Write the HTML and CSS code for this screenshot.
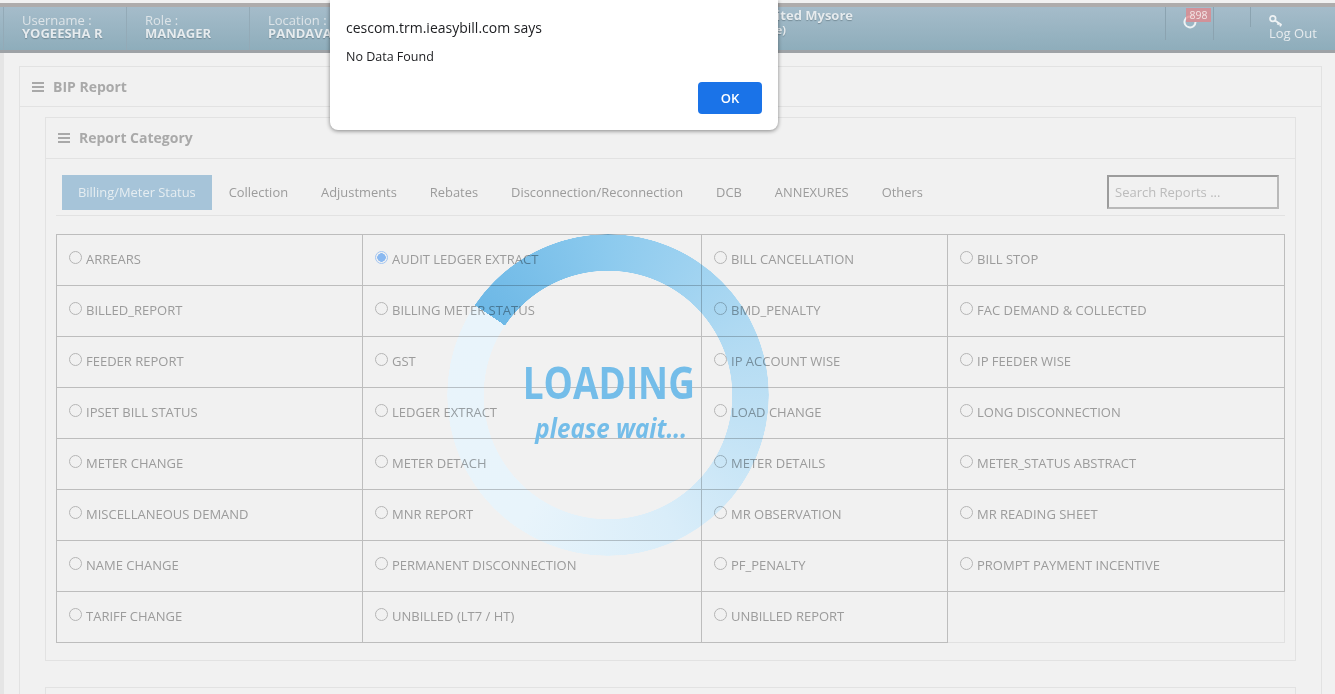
FILE: index.html
```html
<!DOCTYPE html>
<html lang="en">
<head>
<meta charset="utf-8">
<title>BIP Report</title>
<link rel="stylesheet" href="styles.css">
</head>
<body>
<header class="topbar">
  <div class="cell"><span class="cell-label">Username :</span><strong class="cell-value">YOGEESHA R</strong></div>
  <div class="cell"><span class="cell-label">Role :</span><strong class="cell-value">MANAGER</strong></div>
  <div class="cell"><span class="cell-label">Location :</span><strong class="cell-value">PANDAVAPURA</strong></div>
  <div class="org">
    <div class="org-name">Chamundeshwari Electricity Supply Corporation Limited Mysore</div>
    <div class="org-sub">(Mysore Zone)</div>
  </div>
  <div class="tools">
    <div class="tool tool-notify">
      <svg class="refresh" viewBox="0 0 14 14" width="14" height="14"><path d="M9.8 2.2 A5.5 5.5 0 1 0 12.5 7" fill="none" stroke="#eef2f4" stroke-width="2"/></svg>
      <span class="badge">898</span>
    </div>
    <div class="tool tool-spacer"></div>
    <div class="tool tool-logout">
      <svg class="key" viewBox="0 0 14 14" width="14" height="14"><circle cx="3.8" cy="4.6" r="2.8" fill="none" stroke="#eef2f4" stroke-width="1.7"/><path d="M6 6.4 L12.6 11 M9.6 9 L8.6 10.8 M12 10.6 L11 12.4" fill="none" stroke="#eef2f4" stroke-width="1.8"/></svg>
      <span>Log Out</span>
    </div>
  </div>
</header>

<div class="ring"></div>

<main class="page">
  <section class="panel outer">
    <h2 class="panel-head"><span class="burger"></span>BIP Report</h2>
    <section class="panel inner">
      <h3 class="panel-head head-inner"><span class="burger"></span>Report Category</h3>
      <div class="panel-body">
        <nav class="tabs">
          <a class="tab active">Billing/Meter Status</a>
          <a class="tab">Collection</a>
          <a class="tab">Adjustments</a>
          <a class="tab">Rebates</a>
          <a class="tab">Disconnection/Reconnection</a>
          <a class="tab">DCB</a>
          <a class="tab">ANNEXURES</a>
          <a class="tab">Others</a>
          <input class="search" type="text" placeholder="Search Reports ...">
        </nav>
        <div class="reports">
          <label class="report"><input type="radio" name="r"><span>ARREARS</span></label>
          <label class="report"><input type="radio" name="r" checked><span>AUDIT LEDGER EXTRACT</span></label>
          <label class="report"><input type="radio" name="r"><span>BILL CANCELLATION</span></label>
          <label class="report"><input type="radio" name="r"><span>BILL STOP</span></label>
          <label class="report"><input type="radio" name="r"><span>BILLED_REPORT</span></label>
          <label class="report"><input type="radio" name="r"><span>BILLING METER STATUS</span></label>
          <label class="report"><input type="radio" name="r"><span>BMD_PENALTY</span></label>
          <label class="report"><input type="radio" name="r"><span>FAC DEMAND &amp; COLLECTED</span></label>
          <label class="report"><input type="radio" name="r"><span>FEEDER REPORT</span></label>
          <label class="report"><input type="radio" name="r"><span>GST</span></label>
          <label class="report"><input type="radio" name="r"><span>IP ACCOUNT WISE</span></label>
          <label class="report"><input type="radio" name="r"><span>IP FEEDER WISE</span></label>
          <label class="report"><input type="radio" name="r"><span>IPSET BILL STATUS</span></label>
          <label class="report"><input type="radio" name="r"><span>LEDGER EXTRACT</span></label>
          <label class="report"><input type="radio" name="r"><span>LOAD CHANGE</span></label>
          <label class="report"><input type="radio" name="r"><span>LONG DISCONNECTION</span></label>
          <label class="report"><input type="radio" name="r"><span>METER CHANGE</span></label>
          <label class="report"><input type="radio" name="r"><span>METER DETACH</span></label>
          <label class="report"><input type="radio" name="r"><span>METER DETAILS</span></label>
          <label class="report"><input type="radio" name="r"><span>METER_STATUS ABSTRACT</span></label>
          <label class="report"><input type="radio" name="r"><span>MISCELLANEOUS DEMAND</span></label>
          <label class="report"><input type="radio" name="r"><span>MNR REPORT</span></label>
          <label class="report"><input type="radio" name="r"><span>MR OBSERVATION</span></label>
          <label class="report"><input type="radio" name="r"><span>MR READING SHEET</span></label>
          <label class="report"><input type="radio" name="r"><span>NAME CHANGE</span></label>
          <label class="report"><input type="radio" name="r"><span>PERMANENT DISCONNECTION</span></label>
          <label class="report"><input type="radio" name="r"><span>PF_PENALTY</span></label>
          <label class="report"><input type="radio" name="r"><span>PROMPT PAYMENT INCENTIVE</span></label>
          <label class="report"><input type="radio" name="r"><span>TARIFF CHANGE</span></label>
          <label class="report"><input type="radio" name="r"><span>UNBILLED (LT7 / HT)</span></label>
          <label class="report"><input type="radio" name="r"><span>UNBILLED REPORT</span></label>
          <div class="report empty"></div>
        </div>
      </div>
    </section>
    <section class="panel inner next"></section>
  </section>
</main>

<div class="loader-text">
  <div class="loading">LOADING</div>
  <div class="wait">please wait...</div>
</div>

<div class="dialog">
  <div class="dialog-title">cescom.trm.ieasybill.com says</div>
  <div class="dialog-msg">No Data Found</div>
  <div class="dialog-actions"><button class="ok">OK</button></div>
</div>
</body>
</html>
```

FILE: styles.css
```css
* { box-sizing: border-box; }
html, body { margin: 0; height: 694px; overflow: hidden; }
body {
  background: #f1f1f1;
  font-family: "Open Sans", sans-serif;
  color: #a5a5a5;
  padding-top: 3px;
}

/* top bar */
.topbar {
  height: 50px;
  display: flex;
  background: linear-gradient(180deg, #a5bcca 0%, #8eadbb 100%);
  border-top: 4px solid #aeacac;
  border-bottom: 3px solid #9ea2a6;
  padding-left: 3px;
}
.cell {
  width: 123px;
  padding: 7px 0 0 18px;
  border-left: 1px solid #93aab7;
  display: flex;
  flex-direction: column;
  font-size: 13px;
  line-height: 13px;
  color: #dde4e8;
  white-space: nowrap;
}
.cell-value {
  color: #e6ebee;
  font-weight: 700;
  text-shadow: 0 1px 1px rgba(80, 100, 110, .5);
}
.org {
  flex: 0 0 481px;
  text-align: right;
  padding-top: 1px;
  font-weight: 700;
  color: #e6ebee;
  white-space: nowrap;
  text-shadow: 0 1px 1px rgba(80, 100, 110, .5);
}
.org-name { font-size: 13px; line-height: 15px; }
.org-sub { font-size: 11px; line-height: 13px; margin-right: 67px; }
.tools { display: flex; margin-left: auto; }
.tool { border-left: 1px solid #8ba3b0; height: 33px; position: relative; }
.tool-notify { width: 48px; }
.tool-spacer { width: 37px; }
.tool-logout {
  width: 85px;
  border-left: 0;
  padding: 7px 0 0 19px;
  font-size: 13px;
  line-height: 15px;
  color: #e6ebee;
  display: flex;
  flex-direction: column;
}
.tool-logout::before {
  content: "";
  position: absolute;
  left: 0;
  top: 0;
  width: 1px;
  height: 20px;
  background: #8ba3b0;
}
.tool-logout span { margin-top: -2px; }
.key { display: block; flex: none; }
.refresh { position: absolute; left: 17px; top: 8px; }
.badge {
  position: absolute;
  left: 20px;
  top: 1px;
  width: 25px;
  height: 14px;
  background: rgba(226, 134, 138, .75);
  color: #f3e6e6;
  font-size: 10.5px;
  line-height: 14px;
  text-align: center;
}

/* page: multiplied over the loader ring, so its lines and text show through */
.page {
  position: relative;
  mix-blend-mode: multiply;
  padding: 13px 13px 0 19px;
  background: linear-gradient(90deg, #f3f3f3 0 4px, transparent 4px);
}
.panel { border: 1px solid #f0f0f0; }
.outer { border-bottom: 0; }
.inner { margin: 10px 25px 0 25px; }
.next { margin-top: 26px; height: 8px; border-bottom: 0; }
.panel-head {
  margin: 0;
  height: 40px;
  padding-left: 12px;
  display: flex;
  align-items: center;
  gap: 9px;
  font-size: 14px;
  font-weight: 700;
  color: #b3b3b3;
  border-bottom: 1px solid #f0f0f0;
}
.head-inner { height: 41px; padding-bottom: 1px; }
.burger {
  width: 12px;
  height: 10px;
  border-top: 2px solid #b3b3b3;
  border-bottom: 2px solid #b3b3b3;
  position: relative;
}
.burger::after {
  content: "";
  position: absolute;
  left: 0;
  right: 0;
  top: 2px;
  height: 2px;
  background: #b3b3b3;
}
.panel-body { padding: 16px 10px 17px; }

/* tabs */
.tabs {
  display: flex;
  align-items: flex-start;
  height: 41px;
  padding: 0 6px;
  border-bottom: 1px solid #f0f0f0;
  gap: 1px;
}
.tab {
  height: 35px;
  padding: 0 16px;
  font-size: 12.9px;
  line-height: 35px;
  color: #a5a5a5;
  white-space: nowrap;
}
.tab.active { background: #b0d0e6; color: #f3fbff; }
.search {
  margin-left: auto;
  width: 172px;
  height: 34px;
  background: transparent;
  border: 2px solid;
  border-color: #a5a5a5 #c4c4c4 #c4c4c4 #a5a5a5;
  padding: 0 6px;
  font: 13px "Open Sans", sans-serif;
  color: #c7c7c7;
  border-radius: 0;
}
.search::placeholder { color: #c7c7c7; }

/* reports grid */
.reports {
  margin-top: 18px;
  display: grid;
  grid-template-columns: 306px 339px 246px 337px;
  grid-auto-rows: 51px;
  border-top: 1px solid #c8c8c8;
  border-left: 1px solid #c8c8c8;
}
.report {
  display: flex;
  align-items: flex-start;
  padding: 16px 0 0 12px;
  border-right: 1px solid #c8c8c8;
  border-bottom: 1px solid #c8c8c8;
  font-size: 13px;
  line-height: 17px;
  color: #a5a5a5;
}
.report span { margin-left: 4px; }
.report input {
  appearance: none;
  -webkit-appearance: none;
  flex: none;
  width: 13px;
  height: 13px;
  margin: 0;
  border: 1px solid #bfbfbf;
  border-radius: 50%;
  background: transparent;
}
.report input:checked {
  border-color: #aed2ff;
  background: radial-gradient(circle, #92c4ff 0 4px, transparent 4.5px);
}
.empty { border-color: #eeeeee; }

/* loader */
.ring {
  position: absolute;
  left: 447px;
  top: 234px;
  width: 322px;
  height: 322px;
  border-radius: 50%;
  background: conic-gradient(from 304deg,
    #6db8e6 0deg,
    #8ccaee 56deg,
    #b5dcf3 130deg,
    #d9edf9 210deg,
    #e8f4fb 270deg,
    #e9f4fb 356deg);
  -webkit-mask: radial-gradient(circle, transparent 124px, #000 124.5px, #000 160.5px, transparent 161px);
  mask: radial-gradient(circle, transparent 124px, #000 124.5px, #000 160.5px, transparent 161px);
}
.loader-text {
  position: absolute;
  left: 447px;
  top: 352px;
  width: 322px;
  text-align: center;
  color: #74bde9;
  font-weight: 700;
}
.loading { font-size: 44px; line-height: 60px; padding-left: 2px; transform: scaleX(.84); }
.wait { font-size: 26px; line-height: 30px; font-style: italic; margin-top: 1px; padding-left: 7px; transform: scaleX(.93); }

/* dialog */
.dialog {
  position: absolute;
  left: 330px;
  top: 0;
  width: 448px;
  height: 130px;
  background: #fff;
  border-radius: 0 0 8px 8px;
  box-shadow: 0 1px 4px rgba(0, 0, 0, .45);
  padding: 18px 16px 0;
  color: #202124;
}
.dialog-title { font-size: 14px; line-height: 20px; }
.dialog-msg { font-size: 12.5px; line-height: 18px; margin-top: 10px; }
.dialog-actions { display: flex; justify-content: flex-end; margin-top: 16px; }
.ok {
  width: 64px;
  height: 32px;
  border: 0;
  border-radius: 4px;
  background: #1a73e8;
  color: #fff;
  font: 600 13px "Open Sans", sans-serif;
}
```
